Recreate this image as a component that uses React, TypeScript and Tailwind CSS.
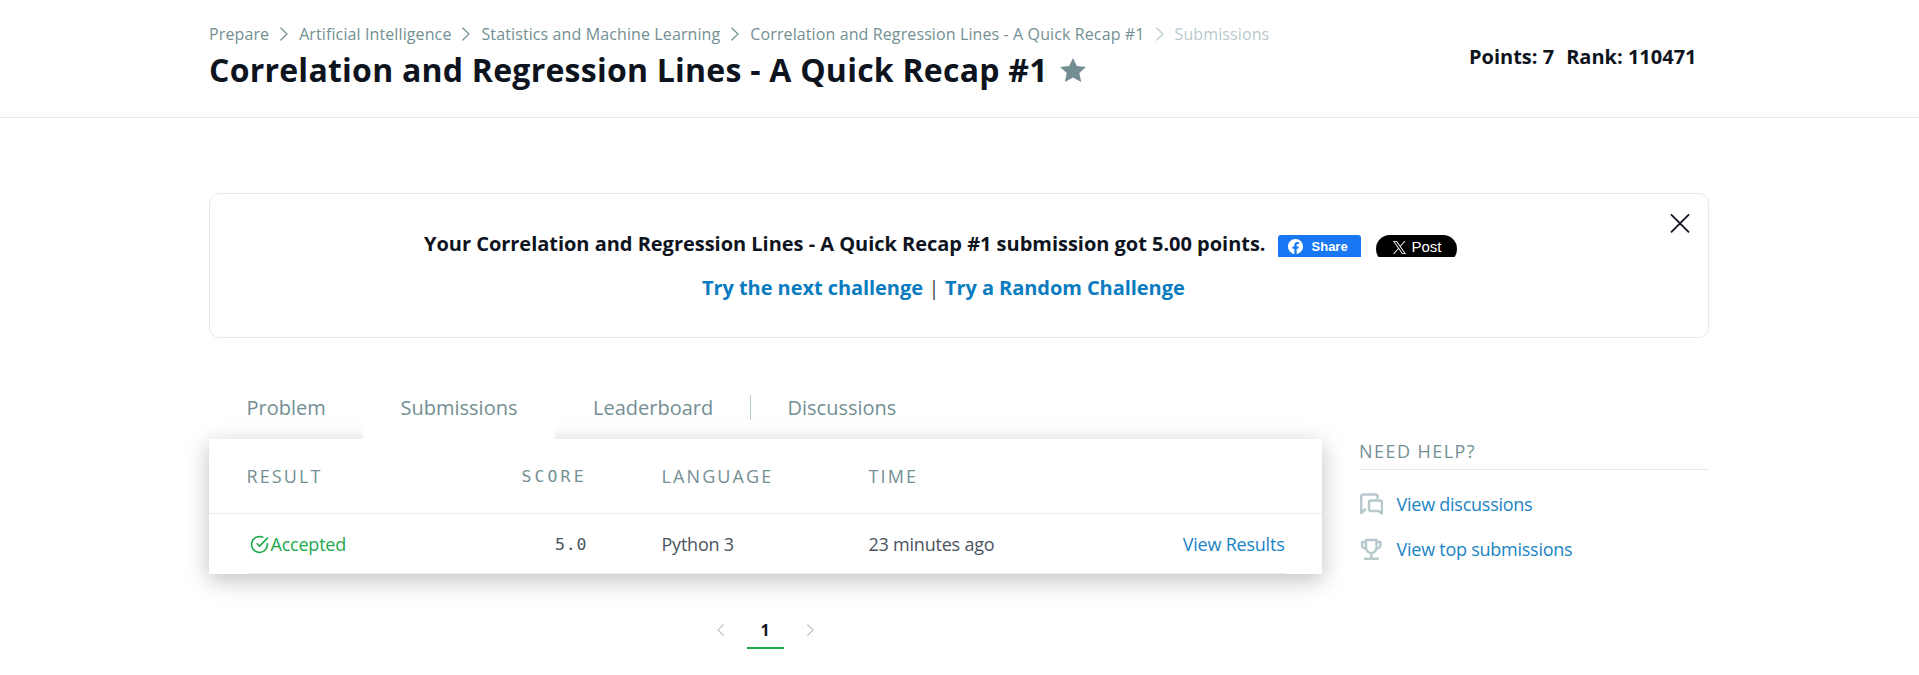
import React from "react";

const crumbs = [
  "Prepare",
  "Artificial Intelligence",
  "Statistics and Machine Learning",
  "Correlation and Regression Lines - A Quick Recap #1",
];

function Chevron({ className = "", left = false }: { className?: string; left?: boolean }) {
  return (
    <svg viewBox="0 0 8 14" fill="none" stroke="currentColor" strokeWidth="1.2" className={className}>
      <path d={left ? "M7.2 1L1 7l6.2 6" : "M.8 1L7 7l-6.2 6"} strokeLinecap="round" />
    </svg>
  );
}

function Header() {
  return (
    <header className="h-[118px] border-b border-[#e7eaeb]">
      <div className="ml-[209px] flex w-[1500px] justify-between">
        <div className="pt-[22px]">
          <nav className="flex h-6 items-center text-base tracking-[0.11px] text-[#738f93]">
            {crumbs.map((c, i) => (
              <React.Fragment key={c}>
                <span>{c}</span>
                <Chevron
                  className={
                    i === crumbs.length - 1
                      ? "mx-[11px] h-[14px] w-2 text-[#b7c9cc]"
                      : "mx-[11px] h-[14px] w-2 text-[#738f93]"
                  }
                />
              </React.Fragment>
            ))}
            <span className="text-[#b7c9cc]">Submissions</span>
          </nav>
          <div className="flex h-12 items-center">
            <h1 className="text-[32px] leading-[48px] font-bold tracking-[0.24px] text-[#0e141e]">
              Correlation and Regression Lines - A Quick Recap #1
            </h1>
            <svg viewBox="0 0 26 24" className="ml-[12.500px] h-6 w-[26px] fill-[#738f93]">
              <path d="M13 0l3.9 8 9.1 1-6.700 6 1.900 9L13 19.500 4.800 24l1.900-9L0 9l9.100-1z" />
            </svg>
          </div>
        </div>
        <div className="mr-[12.500px] flex gap-[12px] pt-[42px] text-[20px] leading-[30px] font-bold text-[#0e141e]">
          <span>Points: 7</span>
          <span>Rank: 110471</span>
        </div>
      </div>
    </header>
  );
}

function ShareButtons() {
  return (
    <div className="mt-[3px] ml-[12px] flex h-[22px] gap-[15px] overflow-hidden font-['Liberation_Sans',Arial,sans-serif] tracking-normal">
      <div className="flex h-7 w-[83px] items-start rounded-[3px] bg-[#1877f2] pt-1 pl-[10px]">
        <svg viewBox="0 0 24 24" className="h-[15px] w-[15px] fill-white">
          <path d="M24 12.070C24 5.410 18.630 0 12 0S0 5.410 0 12.070c0 6.030 4.390 11.030 10.130 11.930v-8.440H7.080v-3.490h3.050V9.410c0-3.020 1.790-4.690 4.530-4.690 1.310 0 2.680.24 2.680.24v2.970h-1.510c-1.490 0-1.960.93-1.960 1.890v2.250h3.330l-.53 3.490h-2.800V24C19.610 23.100 24 18.100 24 12.070z" />
        </svg>
        <span className="ml-[9px] text-[13px] leading-4 font-bold text-white">Share</span>
      </div>
      <div className="flex h-7 w-[81px] items-start rounded-full bg-black pt-1 pl-[17px]">
        <svg viewBox="0 0 24 24" className="mt-[2px] h-[13px] w-[13px] fill-white">
          <path d="M14.258 10.152L23.176 0h-2.113l-7.747 8.813L7.133 0H0l9.352 13.328L0 23.973h2.113l8.176-9.309 6.531 9.309h7.133zm-2.895 3.293l-.949-1.328L2.875 1.560h3.246l6.086 8.523.945 1.328 7.910 11.078h-3.246z" />
        </svg>
        <span className="ml-[6px] text-[15px] leading-4 font-normal text-white">Post</span>
      </div>
    </div>
  );
}

function Banner() {
  return (
    <section className="relative mt-[75px] ml-[209px] h-[145px] w-[1500px] rounded-[10px] border border-[#e7eaeb]">
      <div className="mt-[38px] flex h-[30px] pl-[214px] text-[20px] leading-[24px] font-bold tracking-[-0.025px] whitespace-nowrap text-[#0e141e]">
        <span>Your Correlation and Regression Lines - A Quick Recap #1 submission got 5.00 points.</span>
        <ShareButtons />
      </div>
      <div className="mt-[11px] flex h-[30px] gap-[5.500px] pl-[492px] text-[20px] leading-[30px] font-bold tracking-[-0.060px] text-[#097bbf]">
        <a>Try the next challenge</a>
        <span className="font-normal text-[#39424e]">|</span>
        <a>Try a Random Challenge</a>
      </div>
      <svg viewBox="0 0 20 20" className="absolute top-[19px] right-[18px] h-5 w-5" stroke="#0e141e" strokeWidth="1.8" strokeLinecap="round">
        <path d="M1.500 1.900l17 17M18.500 1.900l-17 17" />
      </svg>
    </section>
  );
}

function Tabs() {
  return (
    <nav className="relative z-10 flex h-[61px] text-[20px] leading-[60px] text-[#738f93]">
      <a className="w-[154px] pl-[37.500px]">Problem</a>
      <a className="w-[192px] bg-white pl-[37.500px]">Submissions</a>
      <a className="w-[195px] pl-[38px]">Leaderboard</a>
      <span className="mt-[17px] h-[25px] w-px bg-[#b7c9cc]" />
      <a className="pl-[36.500px]">Discussions</a>
    </nav>
  );
}

function Submissions() {
  return (
    <div className="h-[135px] w-[1113px] bg-white shadow-[0_6px_22px_rgba(0,0,0,0.25)]">
      <div className="flex h-[75px] items-center border-b border-[#e7eeef] pl-[37.500px] text-[18px] tracking-[2.100px] text-[#738f93]">
        <span className="w-[275px]">RESULT</span>
        <span className="w-[140px] pt-[2px] font-['DejaVu_Sans_Mono',monospace] text-[16.500px] tracking-[3.100px]">SCORE</span>
        <span className="w-[207px]">LANGUAGE</span>
        <span>TIME</span>
      </div>
      <div className="mx-[37.500px] flex h-[60px] items-center border-b border-[#e7eeef] pt-[2px] text-[18px] tracking-[-0.220px] text-[#4b535e]">
        <span className="flex w-[275px] items-center pl-[3px] text-[#1ba94c]">
          <svg viewBox="0 0 24 24" fill="none" stroke="currentColor" strokeWidth="2" strokeLinecap="round" strokeLinejoin="round" className="mr-[2px] h-[19px] w-[19px]">
            <path d="M22 11.080V12a10 10 0 1 1-5.930-9.140" />
            <path d="M22 4L12 14.010l-3-3" />
          </svg>
          Accepted
        </span>
        <span className="w-[140px] pt-[2px] pl-[33.500px] font-['DejaVu_Sans_Mono',monospace] text-[16.500px] tracking-[0.8px]">5.0</span>
        <span className="w-[207px]">Python 3</span>
        <span>23 minutes ago</span>
        <a className="ml-auto text-[#1a84c4]">View Results</a>
      </div>
    </div>
  );
}

function Pagination() {
  return (
    <div className="mt-[44px] flex h-[31px] justify-center">
      <Chevron left className="mt-[6px] mr-[23px] h-3 w-[7px] text-[#b0b4b8]" />
      <span className="w-[37px] border-b-2 border-[#1ba94c] pr-px text-center text-base leading-[24px] font-bold text-[#0e141e]">1</span>
      <Chevron className="mt-[6px] ml-[23px] h-3 w-[7px] text-[#b0b4b8]" />
    </div>
  );
}

function Help() {
  return (
    <aside className="w-[350px] pt-[60px]">
      <h2 className="h-[32px] border-b border-[#e7eaeb] text-[18px] leading-[27px] tracking-[1.450px] text-[#738f93]">NEED HELP?</h2>
      <a className="mt-[19px] flex h-[30px] items-center gap-[13.500px] text-[18px] tracking-[-0.250px] text-[#1a84c4]">
        <svg viewBox="0 0 24 22" className="h-[22px] w-6" fill="none" stroke="#b7c9cc" strokeWidth="2.500" strokeLinejoin="round" strokeLinecap="round">
          <path d="M18.500 5V3.500Q18.500 1.500 16.500 1.500H4.200Q2.200 1.500 2.200 3.500V20l4-3.500" />
          <path d="M12 7.500h9q2 0 2 2v11l-3.500-2.500h-7.500q-2 0-2-2v-6.500q0-2 2-2z" />
        </svg>
        View discussions
      </a>
      <a className="mt-[15px] flex h-[30px] items-center gap-[13.500px] text-[18px] tracking-[-0.250px] text-[#1a84c4]">
        <svg viewBox="0 0 24 22" className="h-[22px] w-6" fill="none" stroke="#b7c9cc" strokeWidth="2.400" strokeLinejoin="round" strokeLinecap="round">
          <path d="M7 2h10.500v7q0 5-5.250 6.500Q7 14 7 9zM7 4H3v3.500q0 2.500 4 3M17.500 4h4v3.500q0 2.500-4 3M12.300 15.500v5M6 20.800h13" />
        </svg>
        View top submissions
      </a>
    </aside>
  );
}

export default function App() {
  return (
    <div className="h-[675px] overflow-hidden bg-white font-['Open_Sans',sans-serif]">
      <Header />
      <Banner />
      <main className="mt-10 ml-[209px] flex w-[1500px] justify-between">
        <div className="w-[1113px]">
          <Tabs />
          <Submissions />
          <Pagination />
        </div>
        <Help />
      </main>
    </div>
  );
}
